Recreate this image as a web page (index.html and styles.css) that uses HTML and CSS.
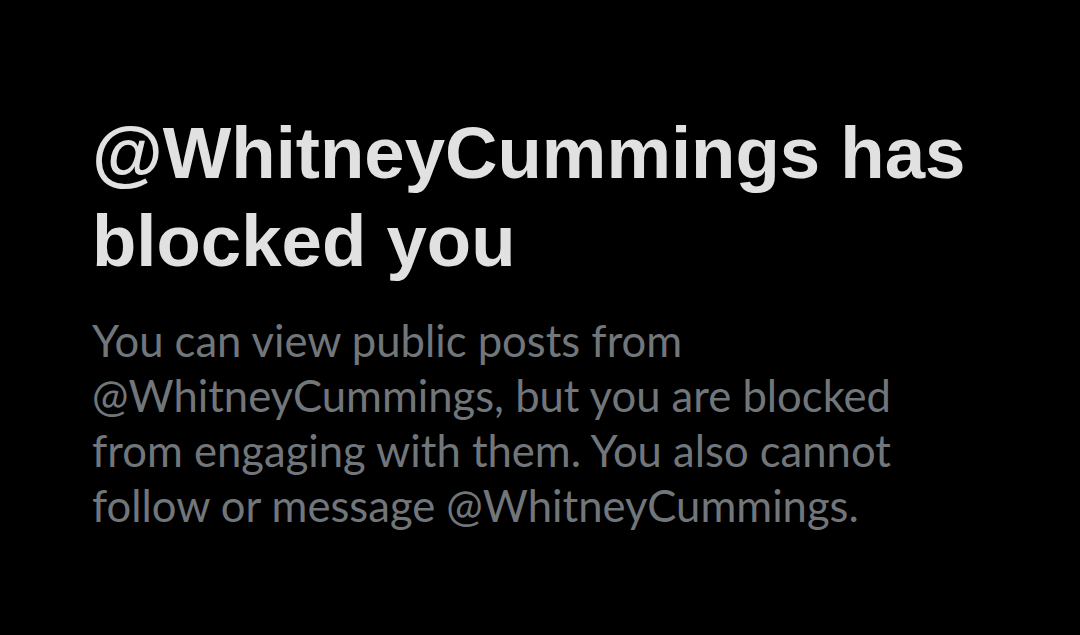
FILE: index.html
```html
<!DOCTYPE html>
<html>
<head>
  <title>Blocked</title>
  <link rel="stylesheet" href="styles.css">
</head>
<body>
  <div class="blocked">
    <h1 class="blocked-title">@WhitneyCummings has blocked you</h1>
    <p class="blocked-text">You can view public posts from @WhitneyCummings, but you are blocked from engaging with them. You also cannot follow or message @WhitneyCummings.</p>
  </div>
</body>
</html>
```

FILE: styles.css
```css
body {
  margin: 0;
  background: #000;
  font-family: 'Liberation Sans', Arial, sans-serif;
}
.blocked {
  padding: 109px 60px 0 92px;
  max-width: 900px;
}
.blocked-title {
  margin: 0;
  color: #e1e1e1;
  font-size: 72.6px;
  line-height: 88px;
  font-weight: bold;
}
.blocked-text {
  margin: 28px 0 0;
  max-width: 820px;
  color: #71767b;
  font-family: Lato, 'Noto Sans', sans-serif;
  font-size: 43.6px;
  line-height: 55px;
}
```
